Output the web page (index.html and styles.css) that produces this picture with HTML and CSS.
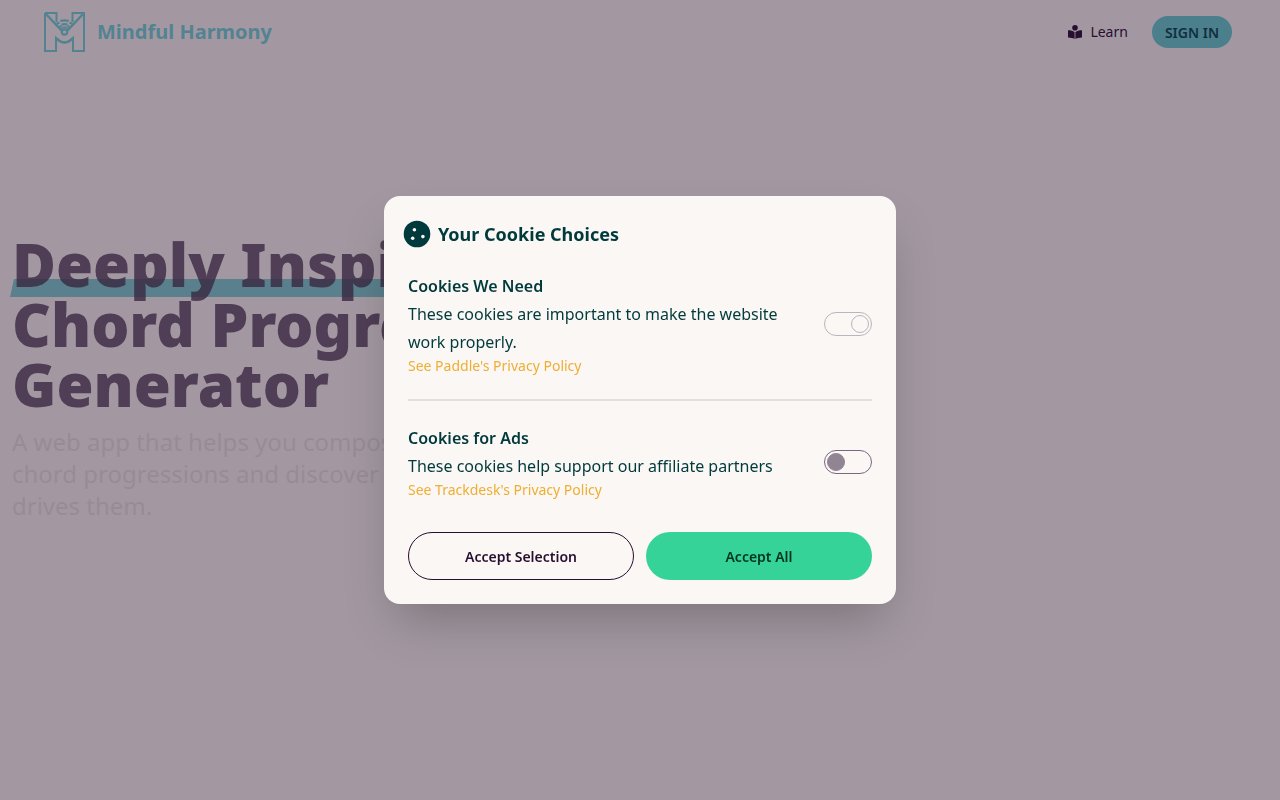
FILE: index.html
```html
<!DOCTYPE html>
<html lang="en">
<head>
<meta charset="utf-8">
<meta name="viewport" content="width=device-width, initial-scale=1">
<title>Mindful Harmony</title>
<link rel="stylesheet" href="styles.css">
</head>
<body>
<header class="navbar">
  <a class="brand" href="#">
    <svg class="brand-logo" viewBox="0 0 41 40" aria-hidden="true" fill="none" stroke="currentColor" stroke-width="2">
      <path d="M1 1H12.500V10M1 1V39H12V26Q20.500 35 29 26V39H40V1H28.500V10"/>
      <path d="M1 1L17.500 18.500M40 1L23.500 18.500M12 26Q20.500 35 29 26" stroke-width="2.500"/>
      <circle cx="20.500" cy="20" r="2.700" stroke-width="2.200"/>
      <path d="M16.300 9Q20.500 7.600 24.700 9M17.600 12.800Q20.500 11.600 23.400 12.800" stroke-width="2.200"/>
      <path d="M17 16.500Q20.500 14 24 16.500" stroke-width="1.500"/>
      <path d="M12.500 12L15.500 10.500M14.500 16L17.500 13.500M28.500 12L25.500 10.500M26.500 16L23.500 13.500"/>
    </svg>
    <span>Mindful Harmony</span>
  </a>
  <nav class="nav-actions">
    <a class="learn" href="#">
      <svg class="learn-icon" viewBox="0 0 14 14" aria-hidden="true" fill="currentColor">
        <circle cx="7" cy="2.800" r="2.800"/>
        <path d="M6.600 7.200C5 5.900 2.500 5.300.5 5.300Q0 5.300 0 5.800V12Q0 12.500.5 12.500C2.500 12.600 5 13 6.600 14ZM7.400 7.200C9 5.900 11.500 5.300 13.500 5.300Q14 5.300 14 5.800V12Q14 12.500 13.500 12.500C11.500 12.600 9 13 7.400 14Z"/>
      </svg>
      <span>Learn</span>
    </a>
    <button class="sign-in" type="button">SIGN IN</button>
  </nav>
</header>

<main class="hero">
  <h1 class="hero-title"><span class="highlight">Deeply Inspiring</span><br>Chord Progression<br>Generator</h1>
  <p class="hero-text">A web app that helps you compose<br>chord progressions and discover what<br>drives them.</p>
</main>

<div class="modal">
  <section class="modal-box" role="dialog" aria-modal="true" aria-labelledby="cookie-title">
    <div class="modal-head">
      <svg class="cookie-icon" viewBox="0 0 28 28" aria-hidden="true">
        <circle class="cookie-body" cx="14" cy="14" r="13.300"/>
        <circle class="cookie-chip" cx="11.400" cy="9.700" r="1.800"/>
        <circle class="cookie-chip" cx="9.700" cy="18.300" r="1.800"/>
        <circle class="cookie-chip" cx="19.900" cy="16.600" r="1.800"/>
      </svg>
      <h2 id="cookie-title">Your Cookie Choices</h2>
    </div>
    <div class="choice">
      <div class="choice-copy">
        <label class="choice-name" for="needed">Cookies We Need</label>
        <p>These cookies are important to make the website work properly.</p>
        <a href="#">See Paddle's Privacy Policy</a>
      </div>
      <input class="toggle" id="needed" type="checkbox" checked disabled>
    </div>
    <hr class="divider">
    <div class="choice">
      <div class="choice-copy">
        <label class="choice-name" for="ads">Cookies for Ads</label>
        <p>These cookies help support our affiliate partners</p>
        <a href="#">See Trackdesk's Privacy Policy</a>
      </div>
      <input class="toggle" id="ads" type="checkbox">
    </div>
    <div class="modal-actions">
      <button class="btn btn-outline" type="button">Accept Selection</button>
      <button class="btn btn-success" type="button">Accept All</button>
    </div>
  </section>
</div>
</body>
</html>
```
FILE: styles.css
```css
*,
*::before,
*::after {
  box-sizing: border-box;
  margin: 0;
}

body {
  display: flex;
  flex-direction: column;
  min-height: 100vh;
  background: #a398a1;
  color: #260f31;
  font: 16px/24px "Noto Sans", sans-serif;
}

a {
  color: inherit;
  text-decoration: none;
}

button {
  font-family: inherit;
  cursor: pointer;
}

.navbar {
  display: flex;
  align-items: center;
  justify-content: space-between;
  height: 64px;
  padding: 0 48px 0 44px;
}

.brand {
  display: flex;
  align-items: center;
  gap: 12px;
  color: #538391;
  font-size: 20px;
  font-weight: 700;
  line-height: 28px;
}

.brand-logo {
  width: 41px;
  height: 40px;
}

.nav-actions {
  display: flex;
  align-items: center;
  gap: 24px;
}

.learn {
  display: flex;
  align-items: center;
  gap: 8px;
  font-size: 14px;
  line-height: 20px;
}

.learn-icon {
  width: 14px;
  height: 14px;
}

.sign-in {
  height: 32px;
  padding: 0 13px;
  border: 0;
  border-radius: 16px;
  background: #4b7f8c;
  color: #102f3e;
  font-size: 14px;
  font-weight: 600;
}

.hero {
  display: flex;
  flex: 1;
  flex-direction: column;
  justify-content: center;
  gap: 12px;
  padding: 0 12px 108px;
}

.hero-title {
  isolation: isolate;
  color: rgb(57 40 66 / 80%);
  font-size: 60px;
  font-weight: 900;
  line-height: 60px;
}

.highlight {
  position: relative;
}

.highlight::after {
  content: "";
  position: absolute;
  z-index: -1;
  right: 0;
  bottom: 8px;
  left: 0;
  height: 18px;
  background: #59808c;
  transform: skewX(-12deg);
}

.hero-text {
  color: #978c96;
  font-size: 24px;
  line-height: 32px;
}

.modal {
  position: fixed;
  z-index: 1;
  inset: 0;
  display: grid;
  place-items: center;
}

.modal-box {
  width: 100%;
  max-width: 512px;
  padding: 24px;
  border-radius: 16px;
  background: #fbf7f4;
  box-shadow: 0 25px 50px -12px rgb(0 0 0 / 25%);
  color: #003a3c;
}

.modal-head {
  display: flex;
  align-items: center;
  gap: 7px;
  margin: 0 0 24px -5px;
}

.modal-head h2 {
  font-size: 18px;
  font-weight: 700;
  line-height: 28px;
}

.cookie-icon {
  width: 28px;
  height: 28px;
}

.cookie-body {
  fill: #003a3c;
}

.cookie-chip {
  fill: #fbf7f4;
}

.choice {
  display: flex;
  align-items: center;
  justify-content: space-between;
  gap: 16px;
}

.choice-copy {
  line-height: 28px;
}

.choice-name {
  display: block;
  font-weight: 600;
}

.choice-copy a {
  display: block;
  color: #efae34;
  font-size: 14px;
  line-height: 20px;
}

.toggle {
  flex: none;
  width: 48px;
  height: 24px;
  padding: 2px;
  border: 1px solid #796784;
  border-radius: 12px;
  appearance: none;
}

.toggle::before {
  content: "";
  display: block;
  width: 18px;
  height: 18px;
  border: 1px solid #918594;
  border-radius: 50%;
  background: #918594;
}

.toggle:checked::before {
  margin-left: auto;
}

.toggle:disabled {
  border-color: #bcb4bf;
}

.toggle:disabled::before {
  border-color: #bcb4bf;
  background: transparent;
}

.divider {
  height: 2px;
  margin: 23px 0;
  border: 0;
  background: #e2dee1;
}

.modal-actions {
  display: grid;
  grid-template-columns: 1fr 1fr;
  gap: 12px;
  margin-top: 32px;
}

.btn {
  height: 48px;
  border: 0;
  border-radius: 24px;
  font-size: 14px;
  font-weight: 600;
}

.btn-outline {
  border: 1px solid #260f31;
  background: transparent;
  color: #260f31;
}

.btn-success {
  background: #36d399;
  color: #003320;
}
```
